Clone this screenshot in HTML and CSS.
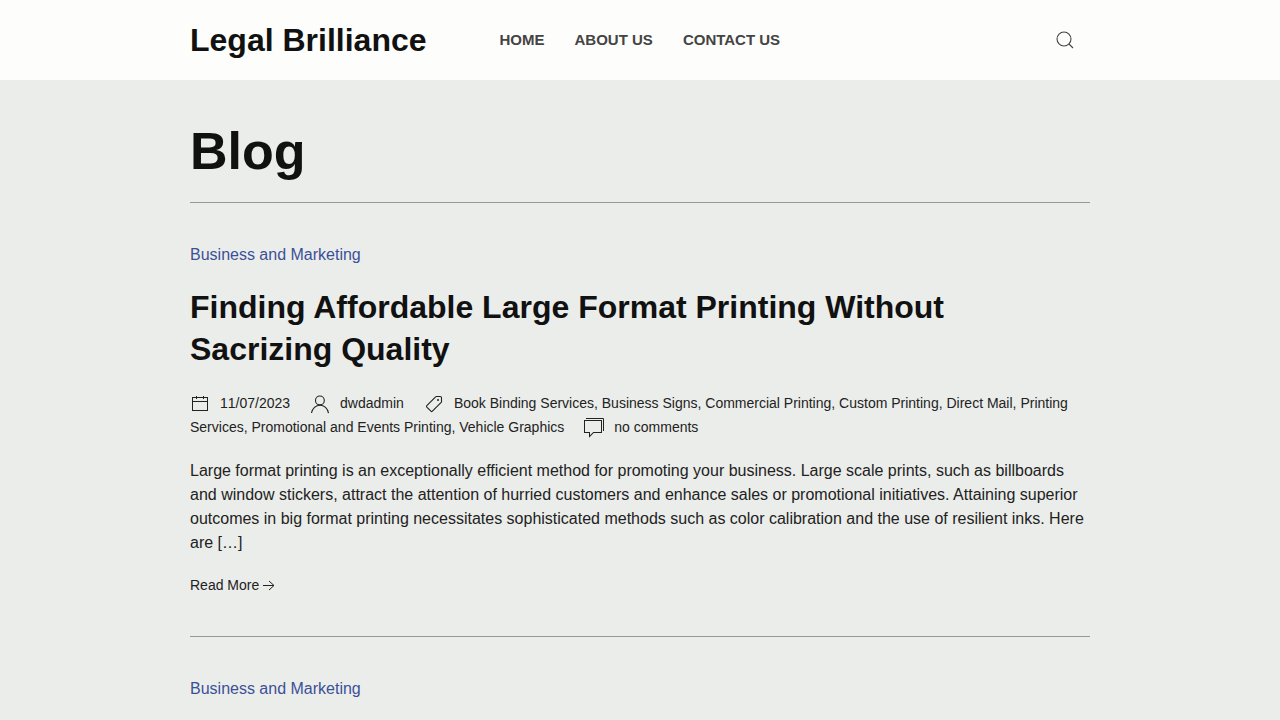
FILE: index.html
```html
<!DOCTYPE html>
<html lang="en">
<head>
    <meta charset="UTF-8">
    <meta name="viewport" content="width=device-width, initial-scale=1.0">
    <title>Blog - Legal Brilliance</title>
    <link rel="stylesheet" href="styles.css">
</head>
<body>
    <header class="site-header">
        <div class="container navbar">
            <a class="logo" href="#">Legal Brilliance</a>
            <nav class="menu">
                <a href="#">Home</a>
                <a href="#">About Us</a>
                <a href="#">Contact Us</a>
            </nav>
            <button class="search-toggle" type="button" aria-label="Search">
                <svg class="icon" width="20" height="20" viewBox="0 0 20 20"><circle class="line" cx="9" cy="9" r="7"/><path class="line" d="M14,14 L18,18"/></svg>
            </button>
        </div>
    </header>
    <main class="container">
        <h1 class="page-title">Blog</h1>
        <article class="post">
            <a class="category" href="#">Business and Marketing</a>
            <h2><a href="#">Finding Affordable Large Format Printing Without Sacrizing Quality</a></h2>
            <p class="meta">
                <span class="meta-item"><svg class="icon" width="20" height="20" viewBox="0 0 20 20"><path d="M2,3 2,17 18,17 18,3Z M17,16 3,16 3,8 17,8Z M17,7 3,7 3,4 17,4Z" fill-rule="evenodd"/><rect x="6" y="2" width="1" height="3"/><rect x="13" y="2" width="1" height="3"/></svg><time datetime="2023-11-07">11/07/2023</time></span><span class="meta-item"><svg class="icon" width="20" height="20" viewBox="0 0 20 20"><circle class="line" cx="9.9" cy="6.4" r="4.4"/><path class="line" d="M1.5,19 C2.3,14.5 5.8,11.2 10,11.2 C14.2,11.2 17.7,14.6 18.5,19.2"/></svg><a href="#">dwdadmin</a></span><span class="meta-item"><svg class="icon" width="20" height="20" viewBox="0 0 20 20"><path class="line" d="M17.5,3.71 L17.5,7.72 C17.5,7.96 17.4,8.2 17.21,8.39 L8.39,17.2 C7.99,17.6 7.33,17.6 6.93,17.2 L2.8,13.07 C2.4,12.67 2.4,12.01 2.8,11.61 L11.61,2.8 C11.81,2.6 12.08,2.5 12.34,2.5 L16.19,2.5 C16.52,2.5 16.86,2.63 17.11,2.88 C17.35,3.11 17.48,3.4 17.5,3.71Z"/><circle cx="14" cy="6" r="1"/></svg><a href="#">Book Binding Services</a>, <a href="#">Business Signs</a>, <a href="#">Commercial Printing</a>, <a href="#">Custom Printing</a>, <a href="#">Direct Mail</a>, <a href="#">Printing Services</a>, <a href="#">Promotional and Events Printing</a>, <a href="#">Vehicle Graphics</a></span><span class="meta-item"><svg class="icon" width="20" height="20" viewBox="0 0 20 20"><polyline class="line thin" points="2 0.5 19.5 0.5 19.5 13"/><path d="M5,19.71 L5,15 L0,15 L0,2 L18,2 L18,15 L9.71,15 Z M1,14 L6,14 L6,17.29 L9.29,14 L17,14 L17,3 L1,3Z" fill-rule="evenodd"/></svg><a href="#">no comments</a></span>
            </p>
            <p class="excerpt">Large format printing is an exceptionally efficient method for promoting your business. Large scale prints, such as billboards and window stickers, attract the attention of hurried customers and enhance sales or promotional initiatives. Attaining superior outcomes in big format printing necessitates sophisticated methods such as color calibration and the use of resilient inks. Here are […]</p>
            <a class="read-more" href="#">Read More<svg class="icon" width="20" height="20" viewBox="0 0 20 20"><polyline class="line thin" points="10 5 15 9.5 10 14"/><path class="line thin" d="M4,9.5 H15"/></svg></a>
        </article>
        <article class="post">
            <a class="category" href="#">Business and Marketing</a>
        </article>
    </main>
</body>
</html>
```
FILE: styles.css
```css
* {
    box-sizing: border-box;
}

body {
    margin: 0;
    font-family: "Liberation Sans", Arial, sans-serif;
    font-size: 16px;
    line-height: 24px;
    color: #222;
    background: #ebedea;
}

a {
    color: inherit;
    text-decoration: none;
}

.container {
    max-width: 940px;
    margin: 0 auto;
    padding: 0 20px;
}

.site-header {
    background: #fdfdfb;
}

.navbar {
    display: flex;
    align-items: center;
    height: 80px;
}

.logo {
    font-size: 32px;
    font-weight: bold;
    color: #111;
    margin-right: 73px;
}

.menu {
    display: flex;
    gap: 30px;
    font-size: 15px;
    font-weight: bold;
    text-transform: uppercase;
    color: #444;
}

.menu a:hover {
    color: #3b5099;
}

.search-toggle {
    display: flex;
    margin-left: auto;
    padding: 15px;
    border: none;
    background: none;
    color: #444;
    cursor: pointer;
}

.icon {
    fill: currentColor;
    vertical-align: middle;
}

.icon .line {
    fill: none;
    stroke: currentColor;
    stroke-width: 1.1;
}

.icon .thin {
    stroke-width: 1;
}

.page-title {
    margin: 40px 0 0;
    padding-bottom: 20px;
    font-size: 52px;
    line-height: 1.2;
    color: #111;
}

.post {
    padding: 40px 0;
    border-top: 1px solid #959994;
}

.category {
    display: block;
    color: #3b5099;
}

.post h2 {
    margin: 20px 0;
    font-size: 32px;
    line-height: 1.3;
    color: #111;
}

.meta {
    margin: 0 0 20px;
    font-size: 14px;
}

.meta time {
    font-kerning: none;
}

.meta-item {
    margin-right: 20px;
}

.meta-item .icon {
    margin-right: 10px;
}

.excerpt {
    margin: 0 0 20px;
}

.read-more {
    display: block;
    font-size: 14px;
    line-height: 1.5;
}
```
